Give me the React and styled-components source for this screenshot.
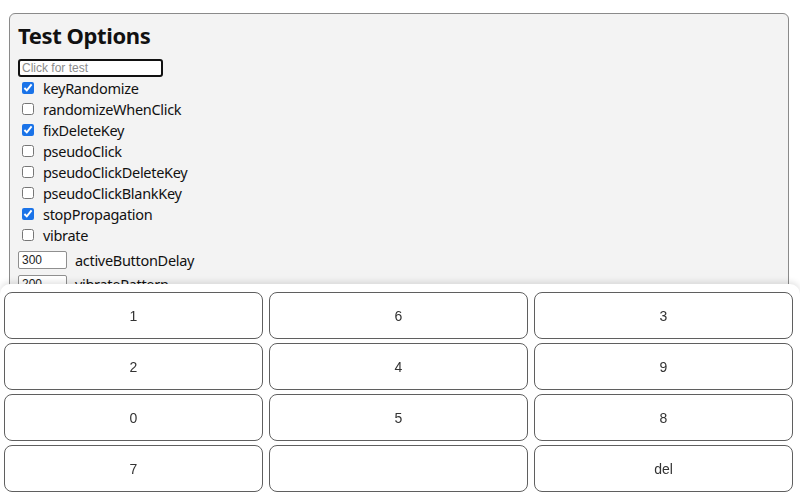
import React from 'react';
import styled, { createGlobalStyle } from 'styled-components';

const GlobalStyle = createGlobalStyle`
  html, body {
    margin: 0;
    padding: 0;
    background: #fff;
  }
  body {
    font-family: "Noto Sans", "Open Sans", sans-serif;
    color: #111;
  }
`;

const Page = styled.div`
  padding: 13px 11px 0 9px;
`;

const Panel = styled.div`
  background-color: #f3f3f3;
  border: 1px solid #8a8a8a;
  border-radius: 6px;
  padding: 5px 8px 160px 8px;
`;

const Title = styled.h2`
  margin: 0 0 8px 0;
  font-size: 22px;
  font-weight: 700;
  line-height: 32px;
  letter-spacing: -0.4px;
`;

const TestInput = styled.input`
  box-sizing: border-box;
  display: block;
  width: 145px;
  height: 18px;
  margin: 0;
  padding: 0 2px;
  border: 2px solid #111;
  border-radius: 3px;
  background: #fff;
  font-family: "Liberation Sans", Arial, sans-serif;
  font-size: 12px;
  outline: none;

  &::placeholder {
    color: #8a8a8a;
  }
`;

const Row = styled.label`
  display: flex;
  align-items: center;
  height: 21px;
  font-size: 14.5px;
  letter-spacing: -0.3px;
  color: #111;
`;

const Check = styled.input`
  width: 12px;
  height: 12px;
  margin: 0 9px 0 4px;
  accent-color: #1a73e8;
`;

const NumberGroup = styled.div`
  padding-top: 3px;
`;

const NumberRow = styled.label`
  display: flex;
  align-items: center;
  height: 24px;
  font-size: 14.5px;
  letter-spacing: -0.3px;
  color: #111;
`;

const NumberInput = styled.input`
  box-sizing: border-box;
  width: 49px;
  height: 18px;
  margin: 0 8px 0 0;
  padding: 0 3px;
  border: 1px solid #8f8f8f;
  border-radius: 2px;
  background: #fff;
  font-family: "Liberation Sans", Arial, sans-serif;
  font-size: 12px;
  color: #222;
`;

const Keyboard = styled.div`
  position: fixed;
  left: 0;
  right: 0;
  bottom: 0;
  height: 210px;
  box-sizing: border-box;
  padding: 8px 7px 1px 4px;
  background: #fff;
  border-radius: 10px 10px 0 0;
  box-shadow: 0 -2px 6px rgba(0, 0, 0, 0.12);
  display: grid;
  grid-template-columns: repeat(3, 1fr);
  grid-auto-rows: 47px;
  column-gap: 6px;
  row-gap: 4px;
`;

const Key = styled.button`
  background: #fff;
  border: 1px solid #5f5f5f;
  border-radius: 8px;
  font-family: "Liberation Sans", Arial, sans-serif;
  font-size: 14px;
  color: #333;
  padding: 0;
  cursor: pointer;
`;

const options = [
  { name: 'keyRandomize', checked: true },
  { name: 'randomizeWhenClick', checked: false },
  { name: 'fixDeleteKey', checked: true },
  { name: 'pseudoClick', checked: false },
  { name: 'pseudoClickDeleteKey', checked: false },
  { name: 'pseudoClickBlankKey', checked: false },
  { name: 'stopPropagation', checked: true },
  { name: 'vibrate', checked: false },
];

const numbers = [
  { name: 'activeButtonDelay', value: '300' },
  { name: 'vibratePattern', value: '200' },
];

const keys = ['1', '6', '3', '2', '4', '9', '0', '5', '8', '7', '', 'del'];

function App() {
  return (
    <>
      <GlobalStyle />
      <Page>
        <Panel>
          <Title>Test Options</Title>
          <TestInput placeholder="Click for test" />
          {options.map((opt) => (
            <Row key={opt.name}>
              <Check type="checkbox" defaultChecked={opt.checked} />
              {opt.name}
            </Row>
          ))}
          <NumberGroup>
            {numbers.map((num) => (
              <NumberRow key={num.name}>
                <NumberInput type="text" defaultValue={num.value} />
                {num.name}
              </NumberRow>
            ))}
          </NumberGroup>
        </Panel>
      </Page>
      <Keyboard>
        {keys.map((k, i) => (
          <Key key={i}>{k}</Key>
        ))}
      </Keyboard>
    </>
  );
}

export default App;
